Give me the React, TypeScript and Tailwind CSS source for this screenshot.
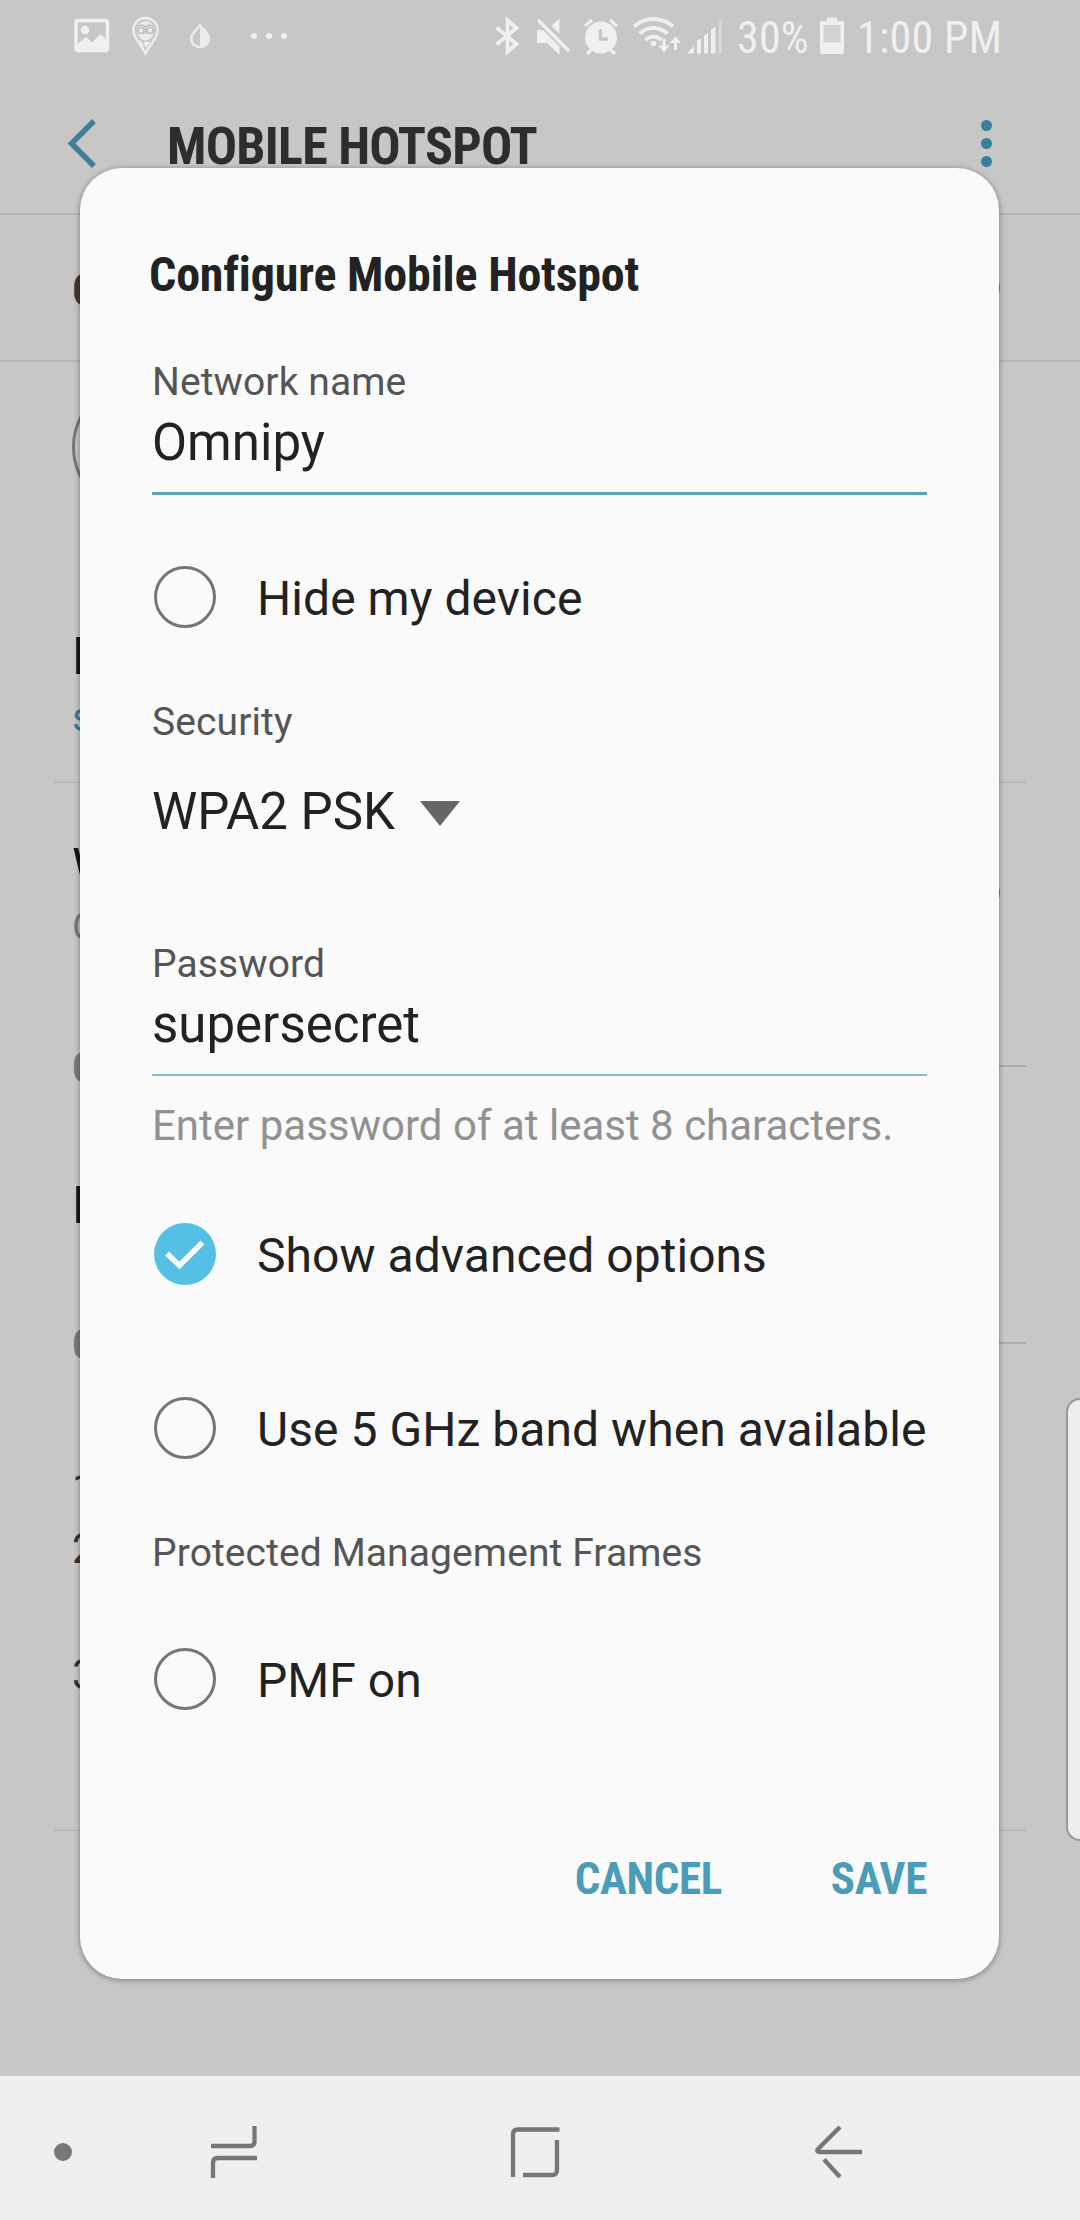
import type { ReactNode } from "react";

function StatusBar() {
  return (
    <div className="flex h-[72px] items-start text-[#f0f0f0]">
      <svg className="mt-[17px] ml-[73px] h-[37px] w-[37px] shrink-0" viewBox="0 0 37 37">
        <rect x="3" y="3.5" width="31.500" height="30" rx="2" fill="none" stroke="currentColor" strokeWidth="3.500" />
        <circle cx="12" cy="13" r="4.300" fill="currentColor" />
        <path d="M4 33V27L13.500 20l5.500 5.500L27.500 17 35 24v9z" fill="currentColor" />
      </svg>
      <svg className="mt-[16px] ml-[21px] h-[40px] w-[29px] shrink-0" viewBox="0 0 29 40">
        <path d="M14.500 2C7.500 2 2.300 7.200 2.300 14c0 8.500 8 14.500 12.200 23.500C18.700 28.500 26.700 22.500 26.700 14 26.700 7.200 21.500 2 14.500 2z" fill="none" stroke="currentColor" strokeWidth="2.300" />
        <path d="M6 12.500C6.500 8 10 5.300 14.500 5.300S22.500 8 23 12.500L22.500 18c-1.500 4-4.500 6.500-8 6.500S8 22 6.500 18z" fill="currentColor" opacity="0.85" />
        <path d="M6 10.500l5-1.500 3.500 2 3.500-2 5 1.500M14.500 12v6" fill="none" stroke="#b4b4b4" strokeWidth="1.200" />
        <circle cx="10" cy="14.500" r="3" fill="none" stroke="#b4b4b4" strokeWidth="1.200" />
        <circle cx="19" cy="14.500" r="3" fill="none" stroke="#b4b4b4" strokeWidth="1.200" />
        <path d="M19.500 25.500l-7 .5 2 6z" fill="currentColor" />
        <path d="M8.500 24l4 6.500" stroke="currentColor" strokeWidth="1.500" />
      </svg>
      <svg className="mt-[22px] ml-[29px] h-[28px] w-[22px] shrink-0" viewBox="0 0 22 28" opacity="0.9">
        <path d="M11 3.500C7.500 7.500 2.200 11.500 2.200 16.500 2.200 22 6.500 25 11 25s8.800-3 8.800-8.500C19.800 11.500 14.500 7.500 11 3.500z" fill="none" stroke="currentColor" strokeWidth="2.600" />
        <path d="M11 3v22c4.500 0 8.800-3 8.800-8.500C19.800 11.500 14.500 7.500 11 3z" fill="currentColor" />
      </svg>
      <div className="mt-[33px] ml-[40px] flex gap-[9px]">
        <span className="h-[6px] w-[6px] rounded-full bg-[#f0f0f0]" />
        <span className="h-[6px] w-[6px] rounded-full bg-[#f0f0f0]" />
        <span className="h-[6px] w-[6px] rounded-full bg-[#f0f0f0]" />
      </div>

      <svg className="mt-[16px] ml-[207px] h-[40px] w-[26px] shrink-0" viewBox="0 0 26 40" fill="none" stroke="currentColor" strokeWidth="3.800">
        <path d="M2.500 11.500L22.500 28 13.500 36V4l9 8L2.500 28.500" />
      </svg>
      <svg className="mt-[16px] ml-[15px] h-[40px] w-[36px] shrink-0" viewBox="0 0 36 40">
        <path d="M2 14h6l16.500 16.500V39L12 27H2zM24.500 2v16L16.500 10z" fill="currentColor" />
        <path d="M3 4l31 31" stroke="currentColor" strokeWidth="3.500" />
      </svg>
      <svg className="mt-[17px] ml-[12px] h-[38px] w-[36px] shrink-0" viewBox="0 0 36 38">
        <circle cx="18" cy="20.500" r="16" fill="currentColor" />
        <path d="M2 9l7-6M34 9l-7-6M8 33l-4 4M28 33l4 4" stroke="currentColor" strokeWidth="3.200" />
        <path d="M17.500 12v10h7.500" fill="none" stroke="#c7c7c7" strokeWidth="3.400" />
      </svg>
      <svg className="mt-[16px] ml-[13px] h-[38px] w-[50px] shrink-0" viewBox="0 0 50 38" fill="none" stroke="currentColor" strokeWidth="4">
        <path d="M2 10.500C13.500 .5 29.500 .5 41 10.500M7.500 17.500c8.500-7.500 19.500-7.500 28 0M13.500 24c5-4.500 11-4.500 16 0" />
        <circle cx="21.500" cy="27.500" r="2.800" fill="currentColor" stroke="none" />
        <path d="M32 23v9M43.500 34v-9" strokeWidth="3" />
        <path d="M26.500 29.500h11L32 36.500zM38 27h11l-5.500-7z" fill="currentColor" stroke="none" />
      </svg>
      <svg className="mt-[16px] ml-[5px] h-[38px] w-[36px] shrink-0" viewBox="0 0 36 38" fill="currentColor">
        <path d="M0 37.500l7-7.500v7.500zM10 24.500l4-2v15h-4zM17 19.500l4-2v20h-4zM24 13.500l4.500-3v27H24z" />
        <path d="M31.500 5.500L35 3v34.500h-3.500z" opacity="0.4" />
      </svg>
      <span className="mt-[10px] ml-[14px] w-[72px] font-['Roboto_Condensed'] text-[44px] leading-[56px] tracking-[0.2px]">30%</span>
      <svg className="mt-[16px] ml-[10px] h-[38px] w-[26px] shrink-0" viewBox="0 0 26 38">
        <path d="M8 1.500h10V5h5.500q1.500 0 1.500 1.500V36q0 2-2 2H3q-2 0-2-2V6.500Q1 5 2.500 5H8z" fill="currentColor" />
        <rect x="4.500" y="9" width="17" height="17.500" fill="#d2d2d2" />
      </svg>
      <span className="mt-[10px] ml-[12px] font-['Roboto_Condensed'] text-[44px] leading-[56px] tracking-[0.3px] whitespace-nowrap">1:00 PM</span>
    </div>
  );
}

function AppHeader() {
  return (
    <div className="flex h-[141px] items-start pl-[66px]">
      <svg className="mt-[46px] h-[51px] w-[32px]" viewBox="0 0 32 51" fill="none" stroke="#3f7e98" strokeWidth="5.500">
        <path d="M28 3L5.500 25.500 28 48" />
      </svg>
      <h1 className="mt-[44px] ml-[69px] font-['Roboto_Condensed'] text-[52px] leading-[62px] font-bold tracking-[-0.75px] text-[#2d2d2d]">MOBILE HOTSPOT</h1>
      <div className="mt-[48px] mr-[88px] ml-auto flex flex-col gap-[7px]">
        <span className="h-[11px] w-[11px] rounded-full bg-[#3a7f99]" />
        <span className="h-[11px] w-[11px] rounded-full bg-[#3a7f99]" />
        <span className="h-[11px] w-[11px] rounded-full bg-[#3a7f99]" />
      </div>
    </div>
  );
}

function SectionHeader({ children }: { children: ReactNode }) {
  return (
    <div className="flex items-center font-['Roboto_Condensed'] text-[42px] leading-[50px] font-bold text-[#7a7a7a]">
      {children}
      <span className="mt-[-5px] mr-[54px] ml-6 h-[2px] flex-1 bg-[#adadad]" />
    </div>
  );
}

/* Settings page that stays dimmed underneath the dialog. */
function SettingsPage() {
  return (
    <div className="h-[2076px] bg-[#c7c7c7]">
      <StatusBar />
      <AppHeader />
      <div className="flex h-[149px] items-center justify-between border-y-2 border-[#b5b5b5] bg-[#c5c5c5] pr-[80px] pl-[72px]">
        <span className="pt-[4px] font-['Roboto_Condensed'] text-[46px] leading-[56px] font-bold text-[#3a3a3a]">O</span>
        <span className="h-[28px] w-[28px] rounded-full border-4 border-[#777]" />
      </div>
      <div className="mt-[21px] ml-[72px] h-[128px] w-[128px] rounded-full border-3 border-[#777]" />
      <div className="mt-[116px] pl-[72px] text-[51px] leading-[60px] text-[#161616]">H</div>
      <div className="mt-[7px] pl-[72px] text-[40px] leading-[48px] text-[#3a7f99]">s</div>
      <div className="mx-[54px] mt-[39px] h-[2px] bg-[#b9b9b9]" />
      <div className="mt-[55px] flex h-[112px] items-center justify-between pr-[80px] pl-[72px]">
        <div className="flex flex-col">
          <span className="text-[51px] leading-[60px] text-[#161616]">W</span>
          <span className="mt-[6px] text-[38px] leading-[46px] text-[#7a7a7a]">O</span>
        </div>
        <span className="mb-[3px] h-[28px] w-[28px] rounded-full border-4 border-[#777]" />
      </div>
      <div className="mt-[93px] pl-[72px]">
        <SectionHeader>C</SectionHeader>
      </div>
      <div className="mt-[83px] pl-[72px] text-[51px] leading-[60px] text-[#161616]">H</div>
      <div className="mt-[84px] pl-[72px]">
        <SectionHeader>C</SectionHeader>
      </div>
      <div className="mt-[94px] pl-[72px] text-[42px] leading-[50px] text-[#333]">1</div>
      <div className="mt-[10px] pl-[72px] text-[42px] leading-[50px] text-[#333]">2</div>
      <div className="mt-[76px] pl-[72px] text-[42px] leading-[50px] text-[#333]">3</div>
      <div className="mx-[54px] mt-[129px] h-[2px] bg-[#b9b9b9]" />
    </div>
  );
}

function CheckRow({ label, checked = false }: { label: string; checked?: boolean }) {
  return (
    <div className="flex h-[62px] items-center">
      {checked ? (
        <svg className="ml-[2px] h-[62px] w-[62px] shrink-0" viewBox="0 0 62 62">
          <circle cx="31" cy="31" r="31" fill="#56c0e4" />
          <path d="M13 30.500L25.500 42.500 48.500 19.500" fill="none" stroke="#fafafa" strokeWidth="5.500" />
        </svg>
      ) : (
        <span className="ml-[2px] h-[62px] w-[62px] shrink-0 rounded-full border-3 border-[#757575]" />
      )}
      <span className="pt-[4px] pl-[41px] text-[48px] leading-[58px] tracking-[0.05px] whitespace-nowrap text-[#222]">{label}</span>
    </div>
  );
}

function FieldLabel({ children }: { children: string }) {
  return <div className="text-[39px] leading-[46px] tracking-[0.1px] text-[#555]">{children}</div>;
}

function HotspotDialog() {
  return (
    <div className="absolute top-[168px] left-[80px] flex h-[1811px] w-[919px] flex-col rounded-[42px] bg-[#fafafa] px-[72px] shadow-[0_1px_5px_1px_rgba(0,0,0,0.3)]">
      <h2 className="mt-[77px] ml-[-3px] font-['Roboto_Condensed'] text-[48px] leading-[60px] font-bold tracking-[-0.18px] text-[#222]">Configure Mobile Hotspot</h2>
      <div className="mt-[54px]">
        <FieldLabel>Network name</FieldLabel>
        <div className="mt-[8px] h-[82px] border-b-3 border-[#5ba5b9] text-[51px] leading-[60px] text-[#222]">Omnipy</div>
      </div>
      <div className="mt-[71px]">
        <CheckRow label="Hide my device" />
      </div>
      <div className="mt-[71px]">
        <FieldLabel>Security</FieldLabel>
        <div className="mt-[37px] flex items-center text-[51px] leading-[60px] text-[#222]">
          WPA2 PSK
          <svg className="mt-[3px] ml-[25px] h-[25px] w-[40px]" viewBox="0 0 40 25">
            <path d="M0 0h40L20 25z" fill="#666" />
          </svg>
        </div>
      </div>
      <div className="mt-[99px]">
        <FieldLabel>Password</FieldLabel>
        <div className="mt-[8px] h-[81px] border-b-2 border-[#86bccb] text-[51px] leading-[60px] text-[#222]">supersecret</div>
        <div className="mt-[25px] text-[42px] leading-[50px] whitespace-nowrap text-[#919191]">Enter password of at least 8 characters.</div>
      </div>
      <div className="mt-[72px]">
        <CheckRow label="Show advanced options" checked />
      </div>
      <div className="mt-[112px]">
        <CheckRow label="Use 5 GHz band when available" />
      </div>
      <div className="mt-[71px]">
        <FieldLabel>Protected Management Frames</FieldLabel>
      </div>
      <div className="mt-[72px]">
        <CheckRow label="PMF on" />
      </div>
      <div className="mt-[139px] flex justify-end gap-[109px] font-['Roboto_Condensed'] text-[45px] leading-[60px] font-bold tracking-[-0.35px] text-[#4a9cb8]">
        <button>CANCEL</button>
        <button>SAVE</button>
      </div>
    </div>
  );
}

function NavBar() {
  return (
    <div className="flex h-[144px] items-center bg-[#efefef] pt-[8px]">
      <span className="ml-[54px] h-[18px] w-[18px] rounded-full bg-[#777]" />
      <svg className="ml-[138px] h-[54px] w-[48px]" viewBox="0 0 48 54" fill="none" stroke="#777" strokeWidth="4.300">
        <path d="M44.500 1v15.500q0 4.500-4.500 4.500H1M3 53V37.500Q3 33 7.500 33H47" />
      </svg>
      <svg className="ml-[252px] h-[52px] w-[52px]" viewBox="0 0 52 52" fill="none" stroke="#777" strokeWidth="4.300">
        <path d="M3 51V8.500Q3 3.500 8 3.500H49.500M47 14v30q0 5-5 5H13" />
      </svg>
      <svg className="ml-[252px] h-[54px] w-[50px]" viewBox="0 0 50 54" fill="none" stroke="#777" strokeWidth="4.300">
        <path d="M26 2L3.500 24.500Q2.500 27 5.500 27H48M10 34.500L26 52" />
      </svg>
    </div>
  );
}

export default function App() {
  return (
    <div className="relative h-[2220px] w-[1080px] overflow-hidden bg-[#c7c7c7] font-['Roboto',sans-serif]">
      <SettingsPage />
      <NavBar />
      <HotspotDialog />
      <div className="absolute top-[1398px] right-0 h-[443px] w-[14px] rounded-l-[14px] border-2 border-r-0 border-[#999] bg-[#eee]" />
    </div>
  );
}
